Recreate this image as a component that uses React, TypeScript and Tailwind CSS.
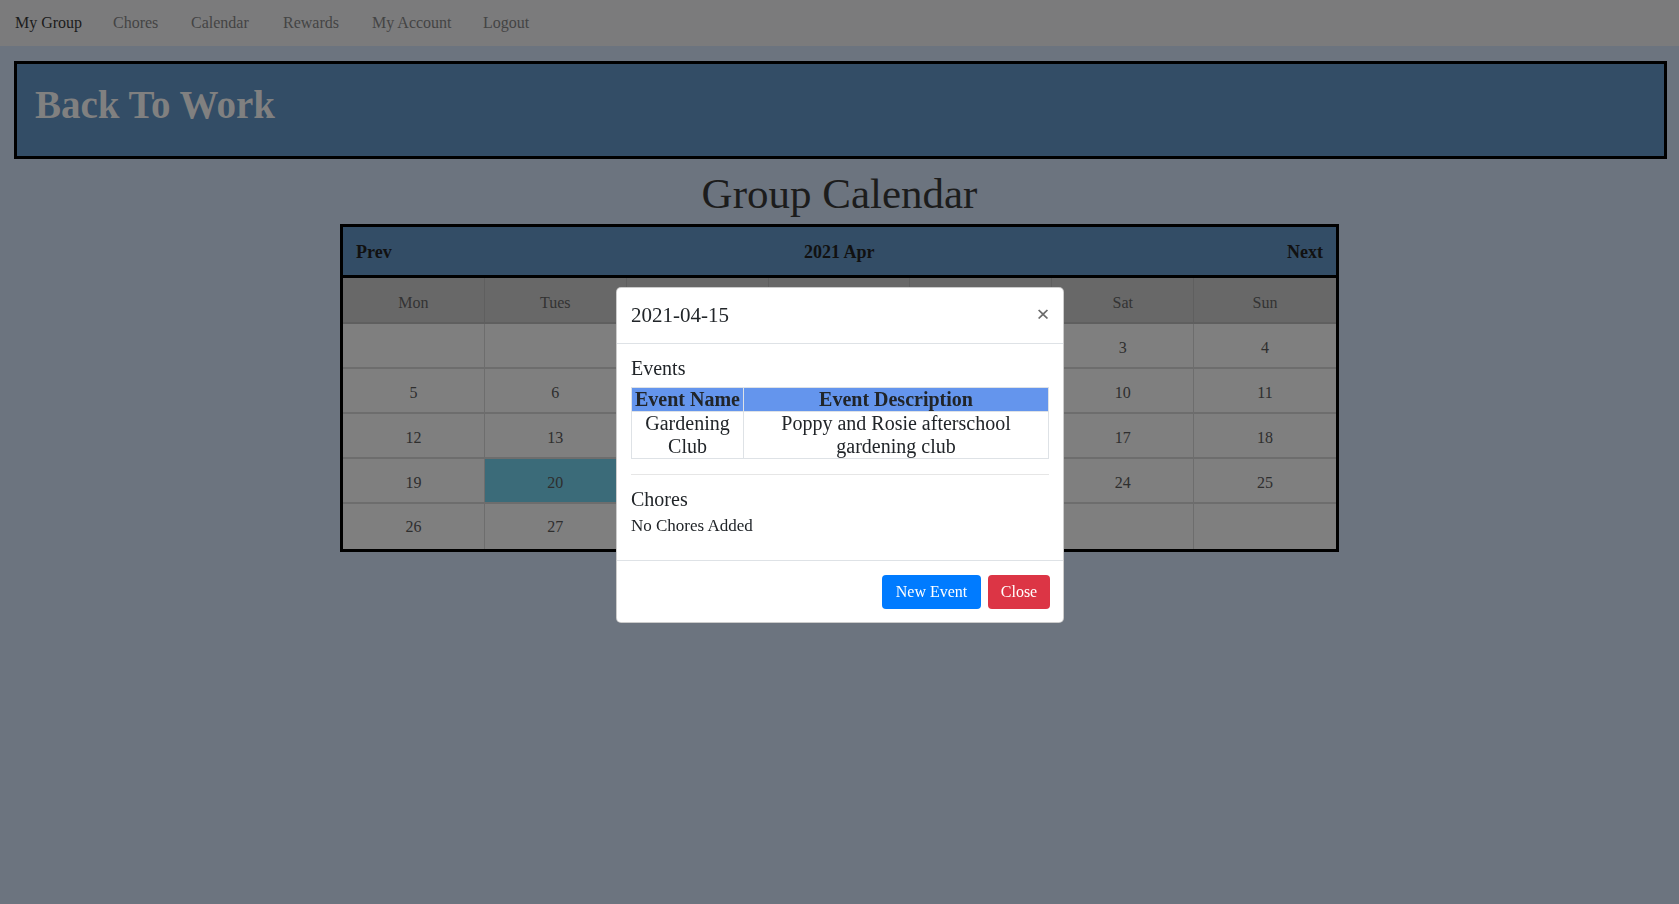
import React from 'react';

const NAV = [
  { label: 'My Group', w: 'w-[98px]', active: true },
  { label: 'Chores', w: 'w-[78px]' },
  { label: 'Calendar', w: 'w-[92px]' },
  { label: 'Rewards', w: 'w-[89px]' },
  { label: 'My Account', w: 'w-[111px]' },
  { label: 'Logout', w: 'w-[80px]' },
];

const DAYS = ['Mon', 'Tues', 'Wed', 'Thurs', 'Fri', 'Sat', 'Sun'];

const WEEKS: (number | null)[][] = [
  [null, null, null, 1, 2, 3, 4],
  [5, 6, 7, 8, 9, 10, 11],
  [12, 13, 14, 15, 16, 17, 18],
  [19, 20, 21, 22, 23, 24, 25],
  [26, 27, 28, 29, 30, null, null],
];

function Navbar() {
  return (
    <nav className="h-[46px] bg-[#7b7b7c] flex items-center pl-[15px] text-[16px]">
      {NAV.map((item) => (
        <a
          key={item.label}
          className={`${item.w} shrink-0 ${item.active ? 'text-[#1b1b1b]' : 'text-[#444444]'}`}
        >
          {item.label}
        </a>
      ))}
    </nav>
  );
}

function Calendar() {
  return (
    <div className="w-[999px] mx-auto border-[3px] border-black">
      <div className="h-[51px] pt-[2px] bg-[#334d66] border-b-[3px] border-black flex items-center justify-between px-[13px] text-[18px] font-bold text-[#111]">
        <span>Prev</span>
        <span>2021 Apr</span>
        <span>Next</span>
      </div>
      <div className="grid grid-cols-7">
        {DAYS.map((d, i) => (
          <div
            key={d}
            className={`h-[46px] pt-[6px] bg-[#686868] border-b-2 border-[#5f5f5f] flex items-center justify-center text-[16px] text-[#333] ${i < 6 ? 'border-r' : ''}`}
          >
            {d}
          </div>
        ))}
        {WEEKS.map((week, wi) =>
          week.map((n, di) => (
            <div
              key={`${wi}-${di}`}
              className={`h-[45px] flex items-center justify-center text-[16px] text-[#2e2e2e] border-[#6d6d6d] ${
                di < 6 ? 'border-r' : ''
              } ${wi < 4 ? 'border-b-2 pt-[4px]' : ''} ${n === 20 ? 'bg-[#3b6b79]' : 'bg-[#7f7f7f]'}`}
            >
              {n ?? ''}
            </div>
          ))
        )}
      </div>
    </div>
  );
}

function DayModal() {
  return (
    <div className="fixed left-[616px] top-[287px] w-[448px] bg-white border border-black/20 rounded-[5px] text-[#212529]">
      <div className="h-[56px] border-b border-[#dee2e6] flex items-center justify-between pl-[14px] pr-[13px]">
        <h5 className="text-[21px] leading-none">2021-04-15</h5>
        <button className="text-[24px] font-bold leading-none text-[#6b6b6b] -mt-[3px]">×</button>
      </div>
      <div className="px-[14px] pt-[12px] pb-[22px]">
        <div className="text-[20px] leading-[24px]">Events</div>
        <table className="mt-[7px] w-full border-collapse text-[20px] leading-[23px] text-center">
          <thead>
            <tr className="bg-[#6495ed]">
              <th className="w-[112px] border border-[#dee2e6] font-bold px-0">Event Name</th>
              <th className="border border-[#dee2e6] font-bold">Event Description</th>
            </tr>
          </thead>
          <tbody>
            <tr>
              <td className="border border-[#dee2e6] px-[6px]">Gardening Club</td>
              <td className="border border-[#dee2e6] px-[20px]">Poppy and Rosie afterschool gardening club</td>
            </tr>
          </tbody>
        </table>
        <hr className="mt-[15px] border-0 border-t border-[#e6e6e6]" />
        <div className="mt-[12px] text-[20px] leading-[24px]">Chores</div>
        <div className="mt-[3px] text-[17px] leading-[24px]">No Chores Added</div>
      </div>
      <div className="border-t border-[#dee2e6] pt-[14px] pb-[13px] pr-[13px] flex justify-end gap-[7px]">
        <button className="w-[99px] h-[34px] rounded-[4px] bg-[#007bff] text-white text-[16px]">New Event</button>
        <button className="w-[62px] h-[34px] rounded-[4px] bg-[#dc3545] text-white text-[16px]">Close</button>
      </div>
    </div>
  );
}

export default function App() {
  return (
    <div className="min-h-[904px] bg-[#6c747f] font-['Liberation_Serif',serif]">
      <Navbar />
      <div className="mt-[15px] ml-[14px] mr-[12px] h-[98px] bg-[#334d66] border-[3px] border-black flex items-center pl-[18px]">
        <h1 className="text-[39px] font-bold text-[#808080] leading-none -mt-[12px]">Back To Work</h1>
      </div>
      <h2 className="mt-[13px] mb-[9px] text-center text-[43px] leading-none text-[#1c1c1c]">Group Calendar</h2>
      <Calendar />
      <DayModal />
    </div>
  );
}
